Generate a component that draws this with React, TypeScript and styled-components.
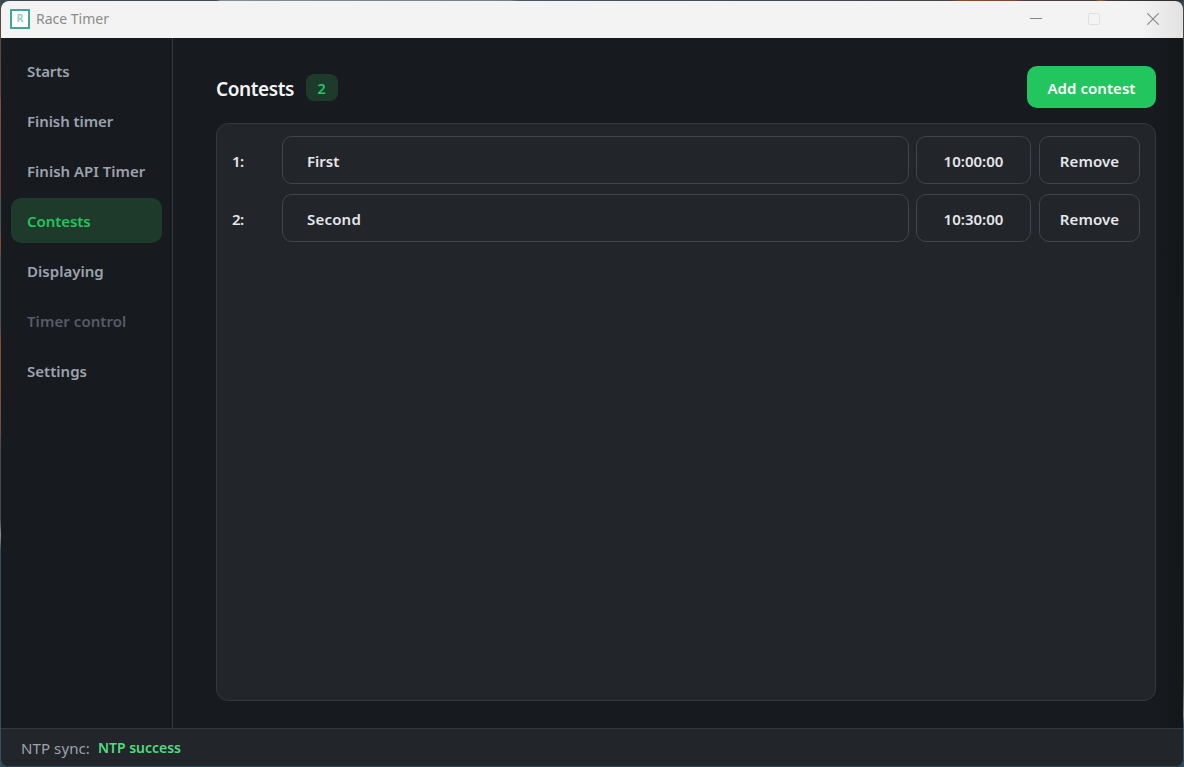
import React from "react";
import styled, { createGlobalStyle } from "styled-components";

const GlobalStyle = createGlobalStyle`
  * { box-sizing: border-box; }
  html, body, #root { height: 100%; }
  body {
    margin: 0;
    overflow: hidden;
    font-family: "Noto Sans", "Open Sans", sans-serif;
    font-size: 15px;
    color: #e5e7eb;
  }
  button { font: inherit; color: inherit; }
`;

const Desktop = styled.div`
  width: 1184px;
  height: 767px;
  padding: 1px;
  background:
    linear-gradient(#4c4947, #6b4638 97px, #8a4a36 98px, #74483a 195px, #44565f 200px, #44565f 220px, #8a4a2c 245px, #44525b 265px, #44525b 320px, #8a4d2b 345px, #74503a 430px, #444c52 445px, #444c52 520px, #8f9090 535px, #34525e 550px, #34525e) 0 0 / 1px 100% no-repeat,
    linear-gradient(#4a4442, #484848 260px, #4c4e50 560px, #54504a 680px, #8b8985 715px, #3a5b69 725px, #2f5262) 1183px 0 / 1px 100% no-repeat,
    linear-gradient(90deg, #3a4a55, #414c55 217px, #7d919b 220px, #6f828c 510px, #43586a 520px, #43495a 800px, #4a4145 950px, #8a4c26 960px, #7b4828 1015px, #4a3e3c 1025px, #4a3e3c 1095px, #a85a20 1100px, #403a3c 1108px, #2a2b2e) 0 0 / 100% 1px no-repeat,
    #2c4652;
`;

const Window = styled.div`
  display: flex;
  flex-direction: column;
  width: 1182px;
  height: 765px;
  border-radius: 8px;
  overflow: hidden;
  background: linear-gradient(90deg, #171a1e 1150px, #14171a);
`;

const TitleBar = styled.header`
  display: flex;
  align-items: center;
  flex: 0 0 37px;
  padding: 0 0 2px 9px;
  background: linear-gradient(90deg, #f3f3f3 1140px, #e2e2e2);
`;

const AppIcon = styled.div`
  display: grid;
  place-items: center;
  width: 20px;
  height: 20px;
  border: 2px solid #45a597;
  background: #fff;
  color: #93cdc4;
  font: 700 11px/1 "DejaVu Sans Mono", monospace;
`;

const AppTitle = styled.div`
  flex: 1;
  padding: 1px 0 0 6px;
  color: #8b8b8b;
  font-size: 14px;
  line-height: 20px;
`;

const WindowControl = styled.div<{ $width: number }>`
  display: grid;
  place-items: center;
  width: ${(p) => p.$width}px;
  svg { display: block; }
`;

const Body = styled.div`
  display: flex;
  flex: 1;
  min-height: 0;
`;

const Sidebar = styled.nav`
  display: flex;
  flex-direction: column;
  gap: 5px;
  width: 172px;
  padding: 10px 10px 0;
  border-right: 1px solid #35383d;
`;

const NavItem = styled.div<{ $state?: "active" | "disabled"; $spacing: number }>`
  display: flex;
  align-items: center;
  height: 45px;
  padding-left: 16px;
  border-radius: 10px;
  white-space: nowrap;
  font-weight: 600;
  letter-spacing: ${(p) => p.$spacing}px;
  background: ${(p) => (p.$state === "active" ? "#1e3a2a" : "transparent")};
  color: ${(p) => (p.$state === "active" ? "#22c55e" : p.$state === "disabled" ? "#565c66" : "#9ca3af")};
`;

const Main = styled.main`
  display: flex;
  flex-direction: column;
  flex: 1;
  padding: 28px 27px 27px 43px;
`;

const Heading = styled.div`
  display: flex;
  align-items: center;
  height: 42px;
  margin-bottom: 15px;
`;

const Title = styled.h1`
  width: 90px;
  margin: 3px 0 0;
  font-size: 19px;
  line-height: 26px;
  font-weight: 600;
  color: #f3f4f6;
  white-space: nowrap;
  letter-spacing: -0.4px;
`;

const Badge = styled.span`
  display: grid;
  place-items: center;
  width: 32px;
  height: 27px;
  padding: 1px 1px 0 0;
  margin-right: auto;
  border-radius: 8px;
  background: #1e3a2a;
  color: #22c55e;
  font-weight: 600;
`;

const AddButton = styled.button`
  width: 129px;
  height: 42px;
  padding: 2px 0 0;
  border: 0;
  border-radius: 10px;
  background: #22c55e;
  color: #fff;
  font-weight: 600;
  letter-spacing: 0.05px;
`;

const Panel = styled.section`
  display: flex;
  flex-direction: column;
  gap: 10px;
  flex: 1;
  padding: 12px 15px;
  border: 1px solid #35383d;
  border-radius: 12px;
  background: #222529;
`;

const Row = styled.div`
  display: grid;
  grid-template-columns: 50px 627px 7px 115px 8px 101px;
  height: 48px;
  font-weight: 600;
`;

const Index = styled.div`
  display: flex;
  align-items: center;
  padding-top: 2px;
  letter-spacing: -0.5px;
`;

const Field = styled.div<{ $column: number; $left?: boolean; $spacing: number }>`
  grid-column: ${(p) => p.$column};
  display: flex;
  align-items: center;
  justify-content: ${(p) => (p.$left ? "flex-start" : "center")};
  padding: 2px ${(p) => (p.$left ? 24 : 0)}px 0;
  border: 1px solid #3f4650;
  border-radius: 10px;
  letter-spacing: ${(p) => p.$spacing}px;
`;

const StatusBar = styled.footer`
  display: flex;
  align-items: center;
  gap: 8px;
  flex: 0 0 38px;
  padding: 1px 0 0 20px;
  border-top: 1px solid #35383d;
  background: #222529;
  color: #9ca3af;
`;

const StatusLabel = styled.span`
  width: 69px;
  white-space: nowrap;
  letter-spacing: 0.1px;
`;

const StatusValue = styled.span`
  padding-bottom: 2px;
  color: #4ade80;
  font-size: 14px;
  font-weight: 600;
  letter-spacing: -0.03px;
`;

const navItems: { label: string; spacing: number; state?: "active" | "disabled" }[] = [
  { label: "Starts", spacing: -0.1 },
  { label: "Finish timer", spacing: -0.07 },
  { label: "Finish API Timer", spacing: 0 },
  { label: "Contests", spacing: -0.07, state: "active" },
  { label: "Displaying", spacing: 0.03 },
  { label: "Timer control", spacing: 0.07, state: "disabled" },
  { label: "Settings", spacing: 0.03 },
];

const contests = [
  { name: "First", time: "10:00:00", spacing: 0 },
  { name: "Second", time: "10:30:00", spacing: 0.2 },
];

export default function App() {
  return (
    <Desktop>
      <GlobalStyle />
      <Window>
        <TitleBar>
          <AppIcon>R</AppIcon>
          <AppTitle>Race Timer</AppTitle>
          <WindowControl $width={58}>
            <svg width="12" height="12"><path d="M0 5.5h12" stroke="#858585" /></svg>
          </WindowControl>
          <WindowControl $width={58}>
            <svg width="12" height="12"><rect x=".5" y=".5" width="11" height="11" rx="1" fill="none" stroke="#dedede" /></svg>
          </WindowControl>
          <WindowControl $width={60}>
            <svg width="12" height="12"><path d="M.3.3l11.4 11.4M11.7.3L.3 11.7" stroke="#858585" strokeWidth="1.1" /></svg>
          </WindowControl>
        </TitleBar>
        <Body>
          <Sidebar>
            {navItems.map((n) => (
              <NavItem key={n.label} $state={n.state} $spacing={n.spacing}>{n.label}</NavItem>
            ))}
          </Sidebar>
          <Main>
            <Heading>
              <Title>Contests</Title>
              <Badge>2</Badge>
              <AddButton>Add contest</AddButton>
            </Heading>
            <Panel>
              {contests.map((c, i) => (
                <Row key={c.name}>
                  <Index>{i + 1}:</Index>
                  <Field $column={2} $left $spacing={c.spacing}>{c.name}</Field>
                  <Field $column={4} $spacing={0}>{c.time}</Field>
                  <Field $column={6} $spacing={0.1}>Remove</Field>
                </Row>
              ))}
            </Panel>
          </Main>
        </Body>
        <StatusBar>
          <StatusLabel>NTP sync:</StatusLabel>
          <StatusValue>NTP success</StatusValue>
        </StatusBar>
      </Window>
    </Desktop>
  );
}
